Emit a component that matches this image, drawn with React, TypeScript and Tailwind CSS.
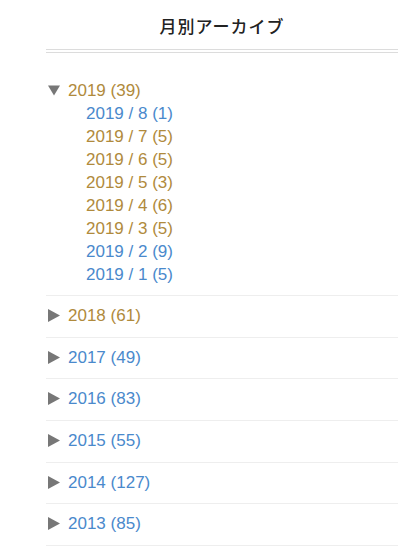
const BLUE = "text-[#4a89cc]";
const GOLD = "text-[#b08a3c]";

const months = [
  { m: 8, n: 1, visited: false },
  { m: 7, n: 5, visited: true },
  { m: 6, n: 5, visited: true },
  { m: 5, n: 3, visited: true },
  { m: 4, n: 6, visited: true },
  { m: 3, n: 5, visited: true },
  { m: 2, n: 9, visited: false },
  { m: 1, n: 5, visited: false },
];

const years = [
  { y: 2018, n: 61, visited: true },
  { y: 2017, n: 49, visited: false },
  { y: 2016, n: 83, visited: false },
  { y: 2015, n: 55, visited: false },
  { y: 2014, n: 127, visited: false },
  { y: 2013, n: 85, visited: false },
];

function Down() {
  return (
    <svg width="12" height="11" viewBox="0 0 12 11" className="shrink-0">
      <path d="M0 0.5 H12 L6 10.5 Z" fill="#777" />
    </svg>
  );
}

function Right() {
  return (
    <svg width="12" height="13" viewBox="0 0 12 13" className="shrink-0">
      <path d="M0 0 L12 6.5 L0 13 Z" fill="#777" />
    </svg>
  );
}

export default function App() {
  return (
    <div className="bg-white min-h-[554px] font-['Liberation_Sans',Arial,sans-serif]">
      <div className="ml-[46px] w-[352px]">
        <h2 className="pt-[14px] h-[49px] text-center text-[17px] leading-[24px] font-medium text-[#222] tracking-[1px] font-['Noto_Sans_CJK_JP',sans-serif]">
          月別アーカイブ
        </h2>
        <div className="h-px bg-[#dcdcdc]" />
        <div className="h-[2px]" />
        <div className="h-px bg-[#dcdcdc]" />

        <ul className="mt-[17px] text-[17px] leading-[23px]">
          <li className="pt-[8.5px] pb-[9.5px] border-b border-[#eee]">
            <div className="flex items-center gap-[8px] pl-[2px]">
              <Down />
              <span className={GOLD}>2019 (39)</span>
            </div>
            <ul className="pl-[40px]">
              {months.map((x) => (
                <li key={x.m} className={x.visited ? GOLD : BLUE}>
                  2019 / {x.m} ({x.n})
                </li>
              ))}
            </ul>
          </li>
          {years.map((x) => (
            <li key={x.y} className="h-[41.67px] pt-[8px] border-b border-[#eee]">
              <div className="flex items-center gap-[8px] pl-[2px]">
                <Right />
                <span className={x.visited ? GOLD : BLUE}>
                  {x.y} ({x.n})
                </span>
              </div>
            </li>
          ))}
        </ul>
      </div>
    </div>
  );
}
